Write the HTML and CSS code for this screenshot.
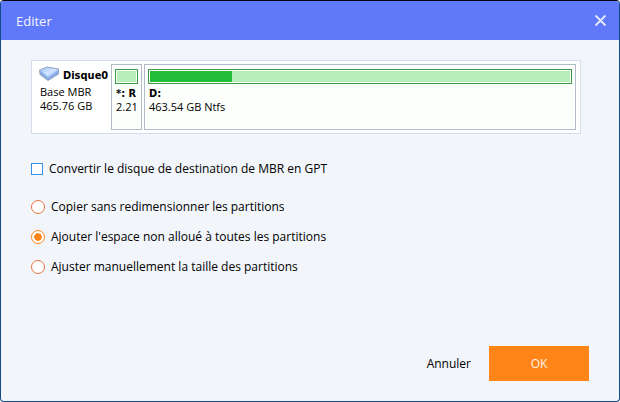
FILE: index.html
```
<!DOCTYPE html>
<html lang="fr">
<head>
<meta charset="utf-8">
<title>Editer</title>
<link rel="stylesheet" href="styles.css">
</head>
<body>
<form class="dialog">
  <header class="titlebar">
    <h1 class="title">Editer</h1>
    <button class="close" type="button" aria-label="Fermer">
      <svg width="13" height="13" viewBox="0 0 13 13"><path d="M1.5 1.5l10 10M11.5 1.5l-10 10" stroke="#dfe5ff" stroke-width="2" fill="none"/></svg>
    </button>
  </header>

  <main class="content">
    <section class="disk">
      <div class="disk-info">
        <div class="disk-name">
          <svg width="22" height="16" viewBox="0 0 22 16">
            <defs>
              <linearGradient id="top" x1="0" y1="0" x2="1" y2="1">
                <stop offset="0" stop-color="#9fc3f6"/>
                <stop offset=".5" stop-color="#d3e5ff"/>
                <stop offset="1" stop-color="#86b2f2"/>
              </linearGradient>
            </defs>
            <path d="M.5 4L8 1L19.500 3V8L9 14.500L1 8.500z" fill="#86abe6" stroke="#93a3bf"/>
            <path d="M1.500 4L8 1.500L19 3.500L9 11z" fill="url(#top)"/>
            <path d="M1.500 4.500L9 11L19 4" fill="none" stroke="#b9d4fc"/>
          </svg>
          <strong>Disque0</strong>
        </div>
        <div class="disk-text">Base MBR</div>
        <div class="disk-text">465.76 GB</div>
      </div>
      <div class="partition partition-small">
        <div class="bar"></div>
        <strong class="label">*: R</strong>
        <div class="size">2.21</div>
      </div>
      <div class="partition partition-main">
        <div class="bar"><div class="used" style="width: 19.6%"></div></div>
        <strong class="label">D:</strong>
        <div class="size">463.54 GB Ntfs</div>
      </div>
    </section>

    <label class="option convert"><input class="check" type="checkbox">Convertir le disque de destination de MBR en GPT</label>

    <div class="options">
      <label class="option"><input class="radio" type="radio" name="resize">Copier sans redimensionner les partitions</label>
      <label class="option"><input class="radio" type="radio" name="resize" checked>Ajouter l'espace non alloué à toutes les partitions</label>
      <label class="option"><input class="radio" type="radio" name="resize">Ajuster manuellement la taille des partitions</label>
    </div>
  </main>

  <footer class="actions">
    <button class="cancel" type="button">Annuler</button>
    <button class="ok" type="submit">OK</button>
  </footer>
</form>
</body>
</html>
```
FILE: styles.css
```
* {
  box-sizing: border-box;
}

body {
  margin: 0;
  background: #fff;
  color: #000;
  font-family: "Open Sans", "Noto Sans", sans-serif;
  font-size: 12px;
  line-height: 16px;
}

button {
  border: 0;
  padding: 0;
  background: none;
  color: inherit;
  font: inherit;
}

input {
  appearance: none;
  flex: none;
  margin: 0;
}

svg {
  display: block;
  flex: none;
}

.dialog {
  display: flex;
  flex-direction: column;
  min-height: 100vh;
  border: 1px solid #144a86;
  border-top-color: #05060d;
  border-radius: 4px;
  overflow: hidden;
  background: #f2f5fa;
}

.titlebar {
  display: flex;
  align-items: center;
  justify-content: space-between;
  height: 39px;
  padding: 0 12px 0 15px;
  background: #6079fb;
  color: #f2f5ff;
}

.title {
  margin: 0;
  font-size: 13px;
  font-weight: normal;
}

.content {
  flex: 1;
  padding: 20px 38px 0 30px;
}

.disk {
  display: flex;
  gap: 2px;
  height: 74px;
  padding: 3px 4px 3px 7px;
  border: 1px solid #d6dceb;
  background: #fff;
}

.disk-info {
  width: 70px;
  padding-top: 2px;
  white-space: nowrap;
}

.disk-name {
  display: flex;
  gap: 2px;
  height: 19px;
}

.disk-name strong {
  line-height: 19px;
}

.disk strong {
  font-family: "DejaVu Sans Condensed", "DejaVu Sans", sans-serif;
  font-size: 11px;
}

.disk-text,
.size {
  font-size: 11px;
  line-height: 14px;
}

.disk-text {
  padding-left: 1px;
}

.partition {
  padding: 4px 3px;
  border: 1px solid #b3bac8;
  background: #fdfffc;
  overflow: hidden;
  white-space: nowrap;
}

.partition-small {
  width: 31px;
}

.partition-main {
  flex: 1;
}

.bar {
  height: 15px;
  padding: 1px;
  border: 1px solid #3a9b48;
  background: #b9edba content-box;
}

.used {
  height: 100%;
  background: #24bd39;
}

.label {
  display: block;
  padding: 4px 1px 0;
  line-height: 12px;
}

.size {
  padding-left: 1px;
}

.option {
  display: flex;
  align-items: center;
  gap: 6px;
}

.convert {
  margin-top: 27px;
}

.options {
  display: flex;
  flex-direction: column;
  gap: 14px;
  margin-top: 22px;
}

.check {
  width: 12px;
  height: 12px;
  border: 1px solid #3590ea;
  background: #fff;
}

.check:checked {
  background: #3590ea;
}

.radio {
  width: 14px;
  height: 14px;
  border: 1px solid #e8713f;
  border-radius: 50%;
  background: #fff;
}

.radio:checked {
  padding: 2px;
  border-color: #ff8519;
  background: radial-gradient(circle closest-side, #ff8519 90%, #fff 100%) content-box, #fff;
}

.actions {
  display: flex;
  justify-content: flex-end;
  gap: 18px;
  padding: 0 30px 20px;
}

.ok {
  width: 100px;
  height: 35px;
  background: #ff8519;
  color: #fff4e4;
}
```
